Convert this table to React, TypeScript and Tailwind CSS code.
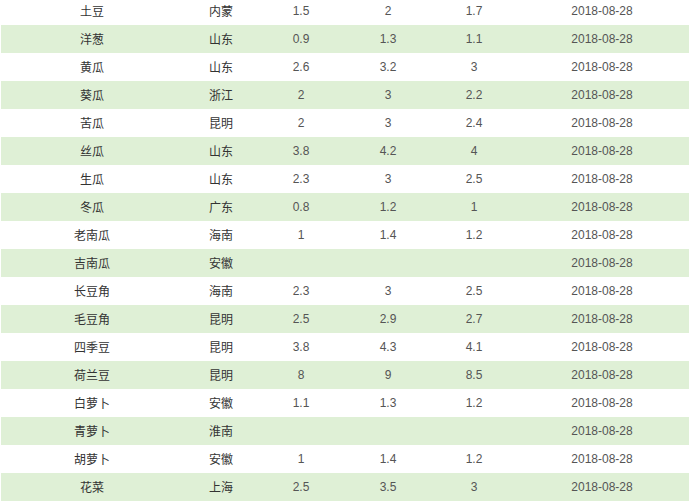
import React from "react";

type Row = {
    name: string;
    origin: string;
    low: string;
    high: string;
    avg: string;
    date: string;
};

const rows: Row[] = [
    { name: "土豆", origin: "内蒙", low: "1.5", high: "2", avg: "1.7", date: "2018-08-28" },
    { name: "洋葱", origin: "山东", low: "0.9", high: "1.3", avg: "1.1", date: "2018-08-28" },
    { name: "黄瓜", origin: "山东", low: "2.6", high: "3.2", avg: "3", date: "2018-08-28" },
    { name: "葵瓜", origin: "浙江", low: "2", high: "3", avg: "2.2", date: "2018-08-28" },
    { name: "苦瓜", origin: "昆明", low: "2", high: "3", avg: "2.4", date: "2018-08-28" },
    { name: "丝瓜", origin: "山东", low: "3.8", high: "4.2", avg: "4", date: "2018-08-28" },
    { name: "生瓜", origin: "山东", low: "2.3", high: "3", avg: "2.5", date: "2018-08-28" },
    { name: "冬瓜", origin: "广东", low: "0.8", high: "1.2", avg: "1", date: "2018-08-28" },
    { name: "老南瓜", origin: "海南", low: "1", high: "1.4", avg: "1.2", date: "2018-08-28" },
    { name: "吉南瓜", origin: "安徽", low: "", high: "", avg: "", date: "2018-08-28" },
    { name: "长豆角", origin: "海南", low: "2.3", high: "3", avg: "2.5", date: "2018-08-28" },
    { name: "毛豆角", origin: "昆明", low: "2.5", high: "2.9", avg: "2.7", date: "2018-08-28" },
    { name: "四季豆", origin: "昆明", low: "3.8", high: "4.3", avg: "4.1", date: "2018-08-28" },
    { name: "荷兰豆", origin: "昆明", low: "8", high: "9", avg: "8.5", date: "2018-08-28" },
    { name: "白萝卜", origin: "安徽", low: "1.1", high: "1.3", avg: "1.2", date: "2018-08-28" },
    { name: "青萝卜", origin: "淮南", low: "", high: "", avg: "", date: "2018-08-28" },
    { name: "胡萝卜", origin: "安徽", low: "1", high: "1.4", avg: "1.2", date: "2018-08-28" },
    { name: "花菜", origin: "上海", low: "2.5", high: "3.5", avg: "3", date: "2018-08-28" },
];

const cjk = "font-['Noto_Sans_CJK_SC',sans-serif] text-[12px] text-[#333]";
const num = "font-['Liberation_Sans',Arial,sans-serif] text-[12px] text-[#555]";

export default function App() {
    return (
        <div className="w-[692px] h-[502px] overflow-hidden bg-white">
            <table className="-mt-[3px] ml-[1px] w-[688px] table-fixed border-collapse">
                <colgroup>
                    <col className="w-[182px]" />
                    <col className="w-[76px]" />
                    <col className="w-[84px]" />
                    <col className="w-[90px]" />
                    <col className="w-[82px]" />
                    <col className="w-[174px]" />
                </colgroup>
                <tbody>
                    {rows.map((r, i) => (
                        <tr key={r.name} className={i % 2 === 1 ? "h-[28px] bg-[#dff0d6]" : "h-[28px] bg-white"}>
                            <td className={`${cjk} text-center p-0`}>{r.name}</td>
                            <td className={`${cjk} text-center p-0`}>{r.origin}</td>
                            <td className={`${num} text-center p-0`}>{r.low}</td>
                            <td className={`${num} text-center p-0`}>{r.high}</td>
                            <td className={`${num} text-center p-0`}>{r.avg}</td>
                            <td className={`${num} text-center p-0`}>{r.date}</td>
                        </tr>
                    ))}
                </tbody>
            </table>
        </div>
    );
}
